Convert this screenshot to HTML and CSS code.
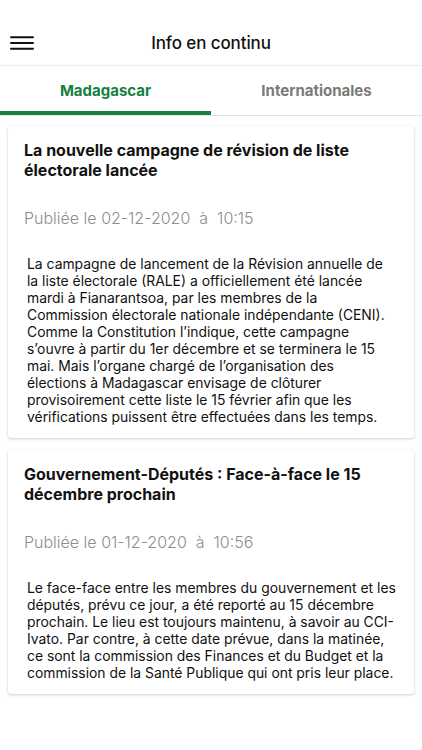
FILE: index.html
```html
<!DOCTYPE html>
<html lang="fr">
<head>
<meta charset="utf-8">
<link rel="stylesheet" href="styles.css">
</head>
<body>
<div class="app">
  <header class="topbar">
    <button class="menu" aria-label="menu">
      <svg width="24" height="14" viewBox="0 0 24 14"><path d="M1 1.2H23M1 7H23M1 12.8H23" stroke="#111" stroke-width="2" stroke-linecap="round"/></svg>
    </button>
    <h1 class="title">Info en continu</h1>
  </header>
  <nav class="tabs">
    <div class="tab active">Madagascar</div>
    <div class="tab">Internationales</div>
  </nav>
  <main class="list">
    <article class="card">
      <h2 class="card-title">La nouvelle campagne de révision de liste électorale lancée</h2>
      <p class="date">Publiée le 02-12-2020&nbsp; à&nbsp; 10:15</p>
      <p class="body">La campagne de lancement de la Révision annuelle de la liste électorale (RALE) a officiellement été lancée mardi à Fianarantsoa, par les membres de la Commission électorale nationale indépendante (CENI). Comme la Constitution l’indique, cette campagne s’ouvre à partir du 1er décembre et se terminera le 15 mai. Mais l’organe chargé de l’organisation des élections à Madagascar envisage de clôturer provisoirement cette liste le 15 février afin que les vérifications puissent être effectuées dans les temps.</p>
    </article>
    <article class="card">
      <h2 class="card-title">Gouvernement-Députés : Face-à-face le 15 décembre prochain</h2>
      <p class="date">Publiée le 01-12-2020&nbsp; à&nbsp; 10:56</p>
      <p class="body">Le face-face entre les membres du gouvernement et les députés, prévu ce jour, a été reporté au 15 décembre prochain. Le lieu est toujours maintenu, à savoir au CCI-Ivato. Par contre, à cette date prévue, dans la matinée, ce sont la commission des Finances et du Budget et la commission de la Santé Publique qui ont pris leur place.</p>
    </article>
  </main>
</div>
</body>
</html>
```
FILE: styles.css
```css
* { box-sizing: border-box; }
html, body { margin: 0; padding: 0; background: #fff; }
body { font-family: Inter, "Liberation Sans", sans-serif; color: #111; }
.app { width: 422px; min-height: 750px; }
.topbar {
  height: 66px;
  padding-top: 20px;
  display: flex;
  align-items: center;
  justify-content: center;
  position: relative;
  border-bottom: 1px solid #ececec;
}
.menu {
  position: absolute;
  left: 10px;
  top: 36px;
  border: 0;
  background: none;
  padding: 0;
  width: 24px;
  height: 14px;
  display: block;
}
.menu svg { display: block; }
.title { margin: 0; font-size: 17px; font-weight: 500; letter-spacing: -0.1px; }
.tabs {
  display: flex;
  height: 50px;
  border-bottom: 1px solid #e3e3e3;
}
.tab {
  flex: 1;
  display: flex;
  align-items: center;
  justify-content: center;
  font-size: 15px;
  font-weight: 700;
  color: #7a7a7a;
  border-bottom: 4px solid transparent;
  padding-top: 4px;
}
.tab.active { color: #16803f; border-bottom-color: #16803f; }
.list { padding: 10px 8px; display: flex; flex-direction: column; gap: 12px; }
.card {
  background: #fff;
  border-radius: 3px;
  box-shadow: 0 1px 3px rgba(0,0,0,0.18), 0 0 1px rgba(0,0,0,0.12);
  padding: 14px 16px 12px 16px;
}
.card-title { margin: 0; font-size: 16px; font-weight: 700; line-height: 20px; color: #111; }
.date { margin: 28px 0 0; font-size: 16px; font-weight: 300; color: #8d8d8d; line-height: 20px; }
.body { margin: 28px 0 0; padding-left: 3px; width: 372px; font-size: 13.9px; line-height: 17px; color: #111; }
```
